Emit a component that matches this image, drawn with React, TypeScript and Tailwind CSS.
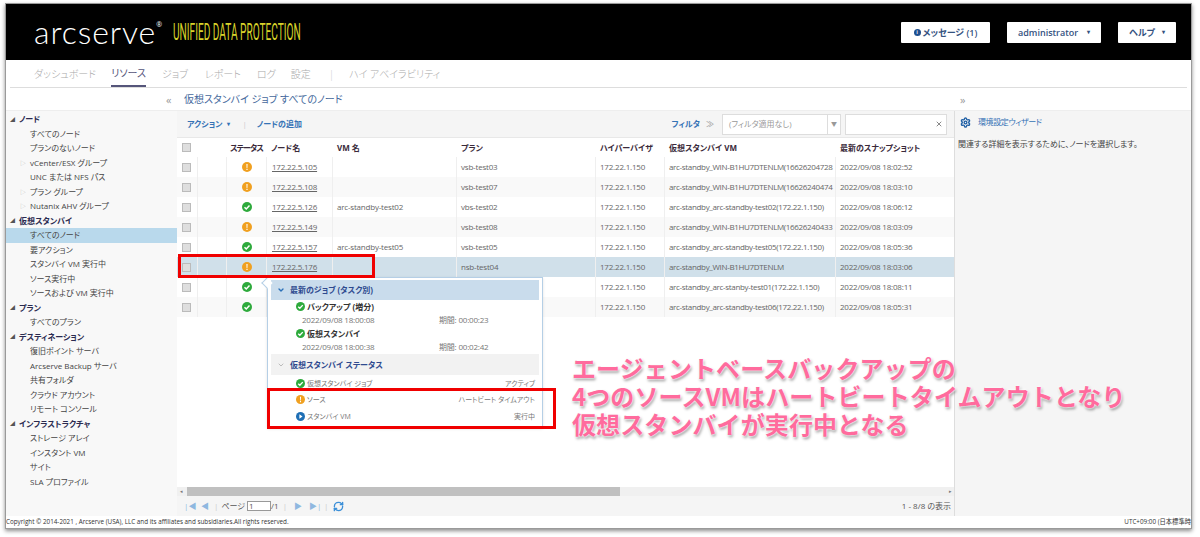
import { ChevronDown, RefreshCw, Settings, X } from "lucide-react";

const tree: { label: string; head?: boolean; arrow?: boolean; active?: boolean }[] = [
  { label: "ノード", head: true },
  { label: "すべてのノード" },
  { label: "プランのないノード" },
  { label: "vCenter/ESX グループ", arrow: true },
  { label: "UNC または NFS パス" },
  { label: "プラン グループ", arrow: true },
  { label: "Nutanix AHV グループ", arrow: true },
  { label: "仮想スタンバイ", head: true },
  { label: "すべてのノード", active: true },
  { label: "要アクション" },
  { label: "スタンバイ VM 実行中" },
  { label: "ソース実行中" },
  { label: "ソースおよび VM 実行中" },
  { label: "プラン", head: true },
  { label: "すべてのプラン" },
  { label: "デスティネーション", head: true },
  { label: "復旧ポイント サーバ" },
  { label: "Arcserve Backup サーバ" },
  { label: "共有フォルダ" },
  { label: "クラウド アカウント" },
  { label: "リモート コンソール" },
  { label: "インフラストラクチャ", head: true },
  { label: "ストレージ アレイ" },
  { label: "インスタント VM" },
  { label: "サイト" },
  { label: "SLA プロファイル" },
];

const rows = [
  { status: "warn", node: "172.22.5.105", vm: "", plan: "vsb-test03", sb: "arc-standby_WIN-B1HU7DTENLM(16626204728", snap: "2022/09/08 18:02:52" },
  { status: "warn", node: "172.22.5.108", vm: "", plan: "vsb-test07", sb: "arc-standby_WIN-B1HU7DTENLM(16626240474", snap: "2022/09/08 18:03:10" },
  { status: "ok", node: "172.22.5.126", vm: "arc-standby-test02", plan: "vbs-test02", sb: "arc-standby_arc-standby-test02(172.22.1.150)", snap: "2022/09/08 18:06:12" },
  { status: "warn", node: "172.22.5.149", vm: "", plan: "vsb-test08", sb: "arc-standby_WIN-B1HU7DTENLM(16626240433", snap: "2022/09/08 18:03:09" },
  { status: "ok", node: "172.22.5.157", vm: "arc-standby-test05", plan: "vsb-test05", sb: "arc-standby_arc-standby-test05(172.22.1.150)", snap: "2022/09/08 18:05:36" },
  { status: "warn", node: "172.22.5.176", vm: "", plan: "nsb-test04", sb: "arc-standby_WIN-B1HU7DTENLM", snap: "2022/09/08 18:03:06", selected: true },
  { status: "ok", node: "", vm: "", plan: "", sb: "arc-standby_arc-stanby-test01(172.22.1.150)", snap: "2022/09/08 18:08:11" },
  { status: "ok", node: "", vm: "", plan: "", sb: "arc-standby_arc-standby-test06(172.22.1.150)", snap: "2022/09/08 18:05:31" },
];

const cols = "grid grid-cols-[20px_29px_40px_66px_124px_139px_69px_171px_119px]";

function StatusIcon({ kind, size = 10 }: { kind: string; size?: number }) {
  const fill = kind === "ok" ? "#2eaa3c" : kind === "warn" ? "#f0a020" : "#1f6fb5";
  return (
    <svg width={size} height={size} viewBox="0 0 20 20" className="shrink-0">
      <circle cx="10" cy="10" r="10" fill={fill} />
      {kind === "ok" && <path d="M5 10.5l3.5 3.5L15 7" fill="none" stroke="#fff" strokeWidth="3" />}
      {kind === "warn" && <path d="M8.8 4h2.4l-.4 8H9.2zM8.8 13.5h2.4V16H8.8z" fill="#fff" />}
      {kind === "play" && <path d="M7.5 5l7 5-7 5z" fill="#fff" />}
    </svg>
  );
}

function Check() {
  return <span className="block w-[9px] h-[9px] border border-[#bbb] bg-[#dedede]" />;
}

function Cell({ children, className = "" }: { children?: React.ReactNode; className?: string }) {
  return <div className={`flex items-center border-l border-[#efefef] overflow-hidden whitespace-nowrap tracking-[-0.2px] ${className}`}>{children}</div>;
}

function Grid() {
  return (
    <div className="flex-1 bg-white">
      <div className={`${cols} h-[19px] items-center font-bold text-[#3a2a3a] whitespace-nowrap`}>
        <div className="pl-[5px]"><Check /></div>
        <div />
        <div className="pl-[4px] tracking-[-0.9px]">ステータス</div>
        <div className="pl-[5px]">ノード名</div>
        <div className="pl-[5px]">VM 名</div>
        <div className="pl-[5px]">プラン</div>
        <div className="pl-[5px]">ハイパーバイザ</div>
        <div className="pl-[5px]">仮想スタンバイ VM</div>
        <div className="pl-[5px]">最新のスナップショット</div>
      </div>
      {rows.map((r, i) => (
        <div
          key={i}
          className={`${cols} h-[20px] text-[#666] ${r.selected ? "bg-[#d0e0ea]" : i % 2 === 0 ? "bg-white" : "bg-[#f9f9f9]"}`}
        >
          <div className="flex items-center pl-[5px]"><Check /></div>
          <Cell />
          <Cell className="justify-center"><StatusIcon kind={r.status} /></Cell>
          <Cell className="pl-[5px] underline">{r.node}</Cell>
          <Cell className="pl-[4px]">{r.vm}</Cell>
          <Cell className="pl-[4px]">{r.plan}</Cell>
          <Cell className="pl-[4px]">172.22.1.150</Cell>
          <Cell className="pl-[4px]"><span className="tracking-[-0.33px]">{r.sb}</span></Cell>
          <Cell className="pl-[4px]">{r.snap}</Cell>
        </div>
      ))}
    </div>
  );
}

function PopupRow({ kind, label, value }: { kind: string; label: string; value: string }) {
  return (
    <div className="flex items-center h-[16.5px] pl-[25px] pr-[4px] text-[7px] text-[#777]">
      <StatusIcon kind={kind} size={9} />
      <span className="ml-[2px]">{label}</span>
      <span className="ml-auto">{value}</span>
    </div>
  );
}

function JobEntry({ title, date, time }: { title: string; date: string; time: string }) {
  return (
    <div className="pl-[25px] h-[27px]">
      <div className="flex items-center h-[13px] font-bold text-[#333]">
        <StatusIcon kind="ok" size={9} />
        <span className="ml-[2px]">{title}</span>
      </div>
      <div className="flex h-[13px] items-center text-[#777] pl-[6px] tracking-[-0.2px]">
        <span className="w-[137px]">{date}</span>
        <span>期間: {time}</span>
      </div>
    </div>
  );
}

function Popup() {
  return (
    <div className="absolute left-[267px] top-[277px] w-[276px] h-[151px] bg-white border border-[#b5cfe6] px-[3px] pt-[2px] shadow-sm">
      <span className="absolute -left-[5px] top-[1px] w-[8px] h-[8px] rotate-45 bg-white border-l border-b border-[#b5cfe6]" />
      <div className="flex items-center h-[20px] bg-[#c9dcec] pl-[6px] font-bold text-[#2f4a8f]">
        <ChevronDown size={8} strokeWidth={4} className="text-[#2a70b8]" />
        <span className="ml-[5px]">最新のジョブ (タスク別)</span>
      </div>
      <div>
        <JobEntry title="バックアップ (増分)" date="2022/09/08 18:00:08" time="00:00:23" />
        <JobEntry title="仮想スタンバイ" date="2022/09/08 18:00:38" time="00:02:42" />
      </div>
      <div className="flex items-center h-[21px] bg-[#f2f2f2] pl-[6px] font-bold text-[#2f4a8f]">
        <ChevronDown size={8} strokeWidth={3} className="text-[#bbb]" />
        <span className="ml-[5px]">仮想スタンバイ ステータス</span>
      </div>
      <PopupRow kind="ok" label="仮想スタンバイ ジョブ" value="アクティブ" />
      <PopupRow kind="warn" label="ソース" value="ハートビート タイムアウト" />
      <PopupRow kind="play" label="スタンバイ VM" value="実行中" />
    </div>
  );
}

export default function App() {
  return (
    <div className="relative w-[1200px] h-[537px] bg-white pt-[3px] pl-[5px] overflow-hidden text-[8px] leading-none font-['Open_Sans','Noto_Sans_CJK_JP',sans-serif] [font-feature-settings:'palt']">
      <div className="w-[1187px] h-[526px] border border-[#9a9a9a] shadow-[0_2px_4px_rgba(0,0,0,0.45)] flex flex-col bg-white">
        {/* Header */}
        <header className="h-[56px] bg-black flex items-center shrink-0 pl-[28px] pr-[15px]">
          <span className="text-[32px] font-['Lato',sans-serif] font-light tracking-[0.9px] text-white leading-none">arcserve</span>
          <span className="text-[7px] text-white self-start mt-[17px]">®</span>
          <span className="ml-[11px] w-[128px] text-[23px] text-[#d8d32a] font-['Roboto',sans-serif] whitespace-nowrap origin-left scale-x-[0.44] leading-none">UNIFIED DATA PROTECTION</span>
          <div className="ml-auto flex items-center gap-[17px] text-[9px] font-semibold text-[#35527f] whitespace-nowrap">
            <div className="flex items-center justify-center gap-[2px] w-[89px] h-[21px] bg-white rounded-[1px]">
              <span className="flex items-center justify-center w-[7px] h-[7px] rounded-full bg-[#1e4f8f] text-white text-[6px]">i</span>
              メッセージ (1)
            </div>
            <div className="flex items-center justify-between px-[11px] w-[94px] h-[21px] bg-white rounded-[1px]">administrator<span className="text-[6px]">▾</span></div>
            <div className="flex items-center justify-between px-[11px] w-[58px] h-[21px] bg-white rounded-[1px]">ヘルプ<span className="text-[6px]">▾</span></div>
          </div>
        </header>

        {/* Nav */}
        <nav className="h-[28px] shrink-0 mx-[4px] pl-[24px] flex items-center border-b border-[#ddd] text-[10px] text-[#aaa] font-light whitespace-nowrap">
          <span>ダッシュボード</span>
          <span className="ml-[15px] h-full flex items-center border-b-2 border-[#55557a] text-[#55557a] font-normal">リソース</span>
          <span className="ml-[16px]">ジョブ</span>
          <span className="ml-[17px]">レポート</span>
          <span className="ml-[16px]">ログ</span>
          <span className="ml-[15px]">設定</span>
          <span className="ml-[18px] text-[#ccc]">|</span>
          <span className="ml-[15px]">ハイ アベイラビリティ</span>
        </nav>

        {/* Title row */}
        <div className="h-[23px] shrink-0 flex items-center text-[#999] border-b border-[#eee] whitespace-nowrap">
          <span className="ml-[160px] w-[18px] text-[11px]">«</span>
          <span className="w-[776px] text-[10px] text-[#44689c]">仮想スタンバイ ジョブ すべてのノード</span>
          <span className="text-[11px]">»</span>
        </div>

        <div className="flex-1 flex min-h-0">
          {/* Sidebar */}
          <aside className="w-[171px] shrink-0 bg-[#f8f8f8] pt-[1px] text-[#444] whitespace-nowrap">
            {tree.map((t, i) => (
              <div key={i} className={`flex items-center h-[14.5px] ${t.active ? "bg-[#b9d9ec]" : ""}`}>
                {t.head ? (
                  <>
                    <span className="ml-[4px] w-[9px] text-[5px] text-[#555]">◢</span>
                    <span className="font-bold text-[#2a2a50]">{t.label}</span>
                  </>
                ) : (
                  <>
                    <span className="ml-[14px] w-[10px] text-[6px] text-[#bbb]">{t.arrow ? "▷" : ""}</span>
                    <span>{t.label}</span>
                  </>
                )}
              </div>
            ))}
          </aside>

          {/* Main */}
          <main className="w-[777px] shrink-0 flex flex-col">
            <div className="h-[27px] shrink-0 bg-[#f5f5f5] border-b border-[#e8e8e8] flex items-center pl-[10px] pr-[7px] font-bold text-[#3573b5] whitespace-nowrap">
              <span>アクション</span>
              <span className="ml-[5px] text-[6px]">▾</span>
              <span className="ml-[12px] text-[#ccc] font-normal">|</span>
              <span className="ml-[10px]">ノードの追加</span>
              <span className="ml-auto">フィルタ</span>
              <span className="ml-[6px] mr-[8px] text-[#999] font-normal">≫</span>
              <div className="w-[119px] h-[21px] flex items-center bg-white border border-[#ddd] text-[#999] font-normal pl-[6px]">
                (フィルタ適用なし)
                <span className="ml-auto w-[13px] h-full border-l border-[#ddd] flex items-center justify-center text-[6px]">▼</span>
              </div>
              <div className="ml-[4px] w-[102px] h-[21px] flex items-center justify-end pr-[3px] bg-white border border-[#ddd] text-[#888]">
                <X size={8} strokeWidth={3} />
              </div>
            </div>
            <Grid />
            <div className="h-[9px] shrink-0 bg-[#f0f0f0] flex items-center text-[#777]">
              <span className="w-[10px] pl-[3px] text-[5px]">◂</span>
              <div className="w-[433px] h-full bg-[#c0c0c0]" />
              <span className="ml-auto pr-[2px] text-[5px]">▸</span>
            </div>
            <div className="h-[20px] shrink-0 bg-[#f5f5f5] flex items-center pl-[7px] pr-[3px] text-[#555] whitespace-nowrap">
              <span className="text-[#8fb8e0] text-[8px] w-[17px]">|◀</span>
              <span className="text-[#8fb8e0] text-[8px] w-[13px]">◀</span>
              <span className="text-[#ccc]">|</span>
              <span className="ml-[3px]">ページ</span>
              <span className="ml-[2px] w-[24px] h-[10px] bg-white border border-[#999] flex items-center pl-[1px]">1</span>
              <span>/1</span>
              <span className="ml-[4px] text-[#ccc]">|</span>
              <span className="ml-[7px] text-[#8fb8e0] text-[8px] w-[15px]">▶</span>
              <span className="text-[#8fb8e0] text-[8px] w-[15px]">▶|</span>
              <span className="text-[#ccc]">|</span>
              <RefreshCw size={11} strokeWidth={3} className="ml-[5px] text-[#3b8fd8]" />
              <span className="ml-auto">1 - 8/8 の表示</span>
            </div>
          </main>

          {/* Right panel */}
          <aside className="flex-1 bg-[#f5f5f5] border-l border-[#ddd] text-[#444] whitespace-nowrap">
            <div className="h-[22px] flex items-center pl-[5px] text-[#3573b5]">
              <Settings size={11} strokeWidth={3} className="text-[#1f5fa5]" />
              <span className="ml-[7px] tracking-[-0.4px]">環境設定ウィザード</span>
            </div>
            <div className="pl-[3px] pt-[7px]">関連する詳細を表示するために、ノードを選択します。</div>
          </aside>
        </div>

        {/* Footer */}
        <footer className="h-[12px] shrink-0 flex items-center justify-between text-[6.3px] text-[#333] bg-white whitespace-nowrap">
          <span>Copyright © 2014-2021 , Arcserve (USA), LLC and its affiliates and subsidiaries.All rights reserved.</span>
          <span>UTC+09:00 (日本標準時</span>
        </footer>
      </div>

      <Popup />

      {/* Red callouts */}
      <div className="absolute left-[178px] top-[254px] w-[197px] h-[24px] border-[3px] border-[#f00000]" />
      <div className="absolute left-[267px] top-[388px] w-[289px] h-[41px] border-[3px] border-[#f00000]" />

      {/* Annotation */}
      <div className="absolute left-[572px] top-[354px] text-[24px] leading-[28px] tracking-[0.1px] font-bold text-[#ff6b9d] whitespace-nowrap font-['Noto_Sans_CJK_JP',sans-serif] [font-feature-settings:normal] [text-shadow:0_0_2px_#fff,0_0_3px_#fff,1px_2px_3px_rgba(0,0,0,0.45)]">
        <div>エージェントベースバックアップの</div>
        <div>4つのソースVMはハートビートタイムアウトとなり</div>
        <div>仮想スタンバイが実行中となる</div>
      </div>
    </div>
  );
}
